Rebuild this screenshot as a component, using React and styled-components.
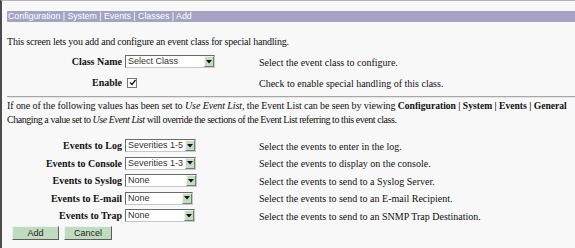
import { Fragment } from 'react'
import styled, { createGlobalStyle } from 'styled-components'

const GlobalStyle = createGlobalStyle`
body {
  margin: 0;
  background: #f8f8f8;
  font-family: "Liberation Serif", "Times New Roman", serif;
  color: #111;
}
`

const Page = styled.div`
min-height: 247px;
border-top: 1px solid #b4b4b4;
border-left: 2px solid #4c4c4c;
padding: 10px 0 0 5px;
`

const Breadcrumb = styled.div`
background: #a3a3c3;
color: #fff;
font-family: "Liberation Sans", Arial, sans-serif;
font-size: 8.8px;
height: 11px;
line-height: 11px;
padding-left: 1px;
white-space: nowrap;
`

const Text = styled.p`
margin: ${p => p.$mt || 0}px 0 0;
font-size: 10px;
line-height: 12px;
letter-spacing: ${p => p.$ls || 0}px;
white-space: nowrap;
`

const Strong = styled.b`
font-size: 9.6px;
letter-spacing: 0;
`

const FormGrid = styled.div`
display: grid;
grid-template-columns: 115px 137px auto;
grid-auto-rows: ${p => p.$row}px;
align-items: center;
margin-top: ${p => p.$mt}px;
`

const Label = styled.div`
text-align: right;
font-weight: bold;
font-size: 10px;
white-space: nowrap;
`

const Control = styled.div`
display: flex;
align-items: center;
padding-left: 3px;
`

const Desc = styled.div`
font-size: 10px;
white-space: nowrap;
padding-top: 1px;
`

const SelectBox = styled.div`
display: flex;
align-items: stretch;
width: ${p => p.$w}px;
height: 13px;
box-sizing: border-box;
border: 1px solid #6a6a6a;
border-right-color: #c8c8c8;
border-bottom-color: #c8c8c8;
background: #fff;
font-family: "Liberation Sans", Arial, sans-serif;
font-size: 9px;
color: #333;
`

const SelectValue = styled.span`
flex: 1;
padding-left: 2px;
line-height: 11px;
white-space: nowrap;
overflow: hidden;
`

const ArrowBox = styled.span`
width: 10px;
display: flex;
align-items: center;
justify-content: center;
background: #c4dcc4;
border-top: 1px solid #eef6ee;
border-left: 1px solid #eef6ee;
border-right: 1px solid #6f806f;
border-bottom: 1px solid #6f806f;
box-sizing: border-box;
`

const Check = styled.span`
display: inline-flex;
align-items: center;
justify-content: center;
width: 8px;
height: 8px;
margin-left: 2px;
border: 1px solid #777;
background: #fff;
`

const Rule = styled.div`
margin-top: 3px;
border-top: 1px solid #a8a8a8;
border-bottom: 1px solid #e4e4e4;
`

const ButtonRow = styled.div`
display: flex;
gap: 5px;
margin: 1px 0 0 5px;
`

const Button = styled.button`
width: ${p => p.$w}px;
height: 14px;
padding: 0;
background: #c0dcc0;
border: 1px solid;
border-color: #eaf4ea #5c5c5c #5c5c5c #eaf4ea;
font-family: "Liberation Sans", Arial, sans-serif;
font-size: 9px;
color: #222;
line-height: 12px;
`

function Select({ value, width }) {
  return (
    <SelectBox $w={width}>
      <SelectValue>{value}</SelectValue>
      <ArrowBox>
        <svg width="6" height="4" viewBox="0 0 6 4">
          <path d="M0 0 H6 L3 3.5 Z" fill="#111" />
        </svg>
      </ArrowBox>
    </SelectBox>
  )
}

const events = [
  { label: 'Events to Log', value: 'Severities 1-5', w: 71, desc: 'Select the events to enter in the log.' },
  { label: 'Events to Console', value: 'Severities 1-3', w: 71, desc: 'Select the events to display on the console.' },
  { label: 'Events to Syslog', value: 'None', w: 72, desc: 'Select the events to send to a Syslog Server.' },
  { label: 'Events to E-mail', value: 'None', w: 68, desc: 'Select the events to send to an E-mail Recipient.' },
  { label: 'Events to Trap', value: 'None', w: 70, desc: 'Select the events to send to an SNMP Trap Destination.' },
]

export default function App() {
  return (
    <>
      <GlobalStyle />
      <Page>
        <Breadcrumb>Configuration | System | Events | Classes | Add</Breadcrumb>
        <Text $mt={14} $ls={-0.2}>This screen lets you add and configure an event class for special handling.</Text>
        <FormGrid $row={21} $mt={3}>
          <Label>Class Name</Label>
          <Control>
            <Select value="Select Class" width={90} />
          </Control>
          <Desc>Select the event class to configure.</Desc>
          <Label>Enable</Label>
          <Control>
            <Check>
              <svg width="7" height="7" viewBox="0 0 7 7">
                <path d="M1 3.5 L3 5.5 L6.5 1" stroke="#111" strokeWidth="1.3" fill="none" />
              </svg>
            </Check>
          </Control>
          <Desc>Check to enable special handling of this class.</Desc>
        </FormGrid>
        <Rule />
        <Text $mt={2} $ls={-0.09}>
          If one of the following values has been set to <i>Use Event List</i>, the Event List can be seen by viewing{' '}
          <Strong>Configuration | System | Events | General</Strong>
        </Text>
        <Text $mt={2} $ls={-0.45}>
          Changing a value set to <i>Use Event List</i> will override the sections of the Event List referring to this event class.
        </Text>
        <FormGrid $row={17.5} $mt={11}>
          {events.map((ev, index) => (
            <Fragment key={`${ev.label}-${index}`}>
              <Label>{ev.label}</Label>
              <Control>
                <Select value={ev.value} width={ev.w} />
              </Control>
              <Desc>{ev.desc}</Desc>
            </Fragment>
          ))}
        </FormGrid>
        <ButtonRow>
          <Button $w={47}>Add</Button>
          <Button $w={48}>Cancel</Button>
        </ButtonRow>
      </Page>
    </>
  )
}
